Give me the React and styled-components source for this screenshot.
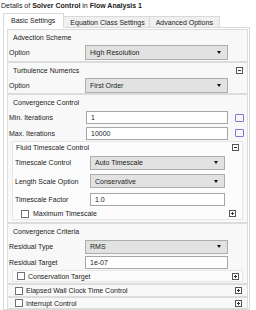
import React from 'react'
import styled, { createGlobalStyle } from 'styled-components'

const Global = createGlobalStyle`
  body {
    margin: 0;
    background: #ffffff;
    font-family: "Liberation Sans", Arial, sans-serif;
    font-size: 7px;
    color: #222222;
  }
`

const Page = styled.div`
  width: 256px;
  height: 310px;
  overflow: hidden;
  display: flex;
  flex-direction: column;
`

const Title = styled.div`
  height: 12px;
  line-height: 12px;
  padding-left: 1px;
  white-space: nowrap;
  flex: none;
  b { font-weight: bold; }
`

const TabStrip = styled.div`
  display: flex;
  align-items: flex-end;
  height: 15px;
  flex: none;
  padding-left: 3px;
`

const Tab = styled.div`
  box-sizing: border-box;
  height: ${p => (p.$active ? 15 : 12)}px;
  line-height: ${p => (p.$active ? 14 : 11)}px;
  padding: ${p => p.$pad};
  background: ${p => (p.$active ? '#ffffff' : '#f0f0f0')};
  border: 1px solid #d9d9d9;
  border-bottom-color: ${p => (p.$active ? '#ffffff' : '#d9d9d9')};
  border-left-width: ${p => (p.$first ? 1 : 0)}px;
  margin-bottom: -1px;
  position: relative;
  z-index: ${p => (p.$active ? 2 : 1)};
  white-space: nowrap;
`

const Panel = styled.div`
  flex: 1;
  margin: 0 6px 0 3px;
  border: 1px solid #d9d9d9;
  background: #ffffff;
  padding: 0 1px 0 3px;
  display: flex;
  flex-direction: column;
  overflow: hidden;
`

const Group = styled.div`
  flex: none;
  border: 1px solid ${p => (p.$inner ? '#e6e6e6' : '#dcdcdc')};
  background: ${p => (p.$inner ? '#fcfcfc' : '#f8f8f8')};
  margin: ${p => p.$margin || '0'};
  padding: ${p => p.$pad || '0'};
  display: flex;
  flex-direction: column;
`

const GroupHead = styled.div`
  display: flex;
  align-items: center;
  justify-content: space-between;
  height: ${p => p.$h}px;
  padding-left: ${p => p.$indent}px;
  padding-right: ${p => p.$right || 0}px;
  white-space: nowrap;
`

const Row = styled.div`
  display: flex;
  align-items: center;
  height: ${p => p.$h}px;
  padding-left: ${p => p.$indent || 1}px;
`

const Label = styled.div`
  width: ${p => p.$w || 76}px;
  flex: none;
  white-space: nowrap;
`

const Select = styled.div`
  flex: none;
  box-sizing: border-box;
  width: ${p => p.$w}px;
  height: ${p => p.$h || 15}px;
  border: 1px solid #adadad;
  background: #e2e2e2;
  padding: 0 6px 0 4px;
  display: flex;
  align-items: center;
  justify-content: space-between;
`

const Arrow = styled.span`
  width: 0;
  height: 0;
  border-left: 2.5px solid transparent;
  border-right: 2.5px solid transparent;
  border-top: 3px solid #111;
`

const Input = styled.div`
  flex: none;
  box-sizing: border-box;
  width: ${p => p.$w}px;
  height: 13px;
  line-height: 11px;
  border: 1px solid #a6a6a6;
  background: #ffffff;
  padding-left: 4px;
`

const Marker = styled.span`
  flex: none;
  box-sizing: border-box;
  width: 9px;
  height: 8px;
  margin-left: 7px;
  border: 1.5px solid #7878d8;
  border-radius: 1px;
`

const Check = styled.span`
  flex: none;
  box-sizing: border-box;
  width: 8px;
  height: 8px;
  border: 1px solid #707070;
  background: #ffffff;
  margin-right: ${p => p.$gap || 4}px;
`

const Toggle = styled.span`
  flex: none;
  position: relative;
  box-sizing: border-box;
  width: 7px;
  height: 7px;
  border: 1px solid #555555;
  background: #ffffff;
  &::before {
    content: '';
    position: absolute;
    left: 1px;
    right: 1px;
    top: 2px;
    height: 1px;
    background: #333333;
  }
  &::after {
    content: '';
    position: absolute;
    top: 1px;
    bottom: 1px;
    left: 2px;
    width: 1px;
    background: ${p => (p.$open ? 'transparent' : '#333333')};
  }
`

const CheckHead = styled.div`
  display: flex;
  align-items: center;
  height: ${p => p.$h}px;
  padding-left: ${p => p.$indent}px;
  padding-right: ${p => p.$right || 0}px;
  white-space: nowrap;
`

const Grow = styled.span`
  flex: 1;
`

function Dropdown({ value, w, h }) {
  return (
    <Select $w={w} $h={h}>
      <span>{value}</span>
      <Arrow />
    </Select>
  )
}

function CheckGroup({ label, indent, right, h, gap }) {
  return (
    <CheckHead $indent={indent} $right={right} $h={h}>
      <Check $gap={gap} />
      <span>{label}</span>
      <Grow />
      <Toggle />
    </CheckHead>
  )
}

export default function App() {
  return (
    <Page>
      <Global />
      <Title>
        Details of <b>Solver Control</b> in <b>Flow Analysis 1</b>
      </Title>
      <TabStrip>
        <Tab $active $first $pad="0 8px 0 7px">Basic Settings</Tab>
        <Tab $pad="0 4px 0 6px">Equation Class Settings</Tab>
        <Tab $pad="0 6px 0 6px">Advanced Options</Tab>
      </TabStrip>
      <Panel>
        <Group $margin="1px 0 0 0">
          <GroupHead $h={14} $indent={5}>Advection Scheme</GroupHead>
          <Row $h={17}>
            <Label>Option</Label>
            <Dropdown value="High Resolution" w={143} />
          </Row>
        </Group>

        <Group>
          <GroupHead $h={14} $indent={5} $right={4}>
            <span>Turbulence Numerics</span>
            <Toggle $open />
          </GroupHead>
          <Row $h={16}>
            <Label>Option</Label>
            <Dropdown value="First Order" w={143} />
          </Row>
        </Group>

        <Group $pad="0 0 2px 0">
          <GroupHead $h={15} $indent={5}>Convergence Control</GroupHead>
          <Row $h={15}>
            <Label $w={77}>Min. Iterations</Label>
            <Input $w={142}>1</Input>
            <Marker />
          </Row>
          <Row $h={16}>
            <Label $w={77}>Max. Iterations</Label>
            <Input $w={142}>10000</Input>
            <Marker />
          </Row>
          <Group $inner $margin="0 4px 0 4px">
            <GroupHead $h={11} $indent={3} $right={3}>
              <span>Fluid Timescale Control</span>
              <Toggle $open />
            </GroupHead>
            <Row $h={19} $indent={2}>
              <Label $w={75}>Timescale Control</Label>
              <Dropdown value="Auto Timescale" w={135} h={14} />
            </Row>
            <Row $h={18} $indent={2}>
              <Label $w={75}>Length Scale Option</Label>
              <Dropdown value="Conservative" w={135} h={14} />
            </Row>
            <Row $h={18} $indent={2}>
              <Label $w={75}>Timescale Factor</Label>
              <Input $w={135}>1.0</Input>
            </Row>
            <CheckGroup label="Maximum Timescale" indent={8} right={6} h={11} />
          </Group>
        </Group>

        <Group $pad="0 0 1px 0">
          <GroupHead $h={15} $indent={5}>Convergence Criteria</GroupHead>
          <Row $h={15}>
            <Label>Residual Type</Label>
            <Dropdown value="RMS" w={143} h={14} />
          </Row>
          <Row $h={16}>
            <Label>Residual Target</Label>
            <Input $w={143}>1e-07</Input>
          </Row>
          <Group $inner $margin="0 4px 0 4px">
            <CheckGroup label="Conservation Target" indent={4} right={3} gap={3} h={10} />
          </Group>
        </Group>

        <Group>
          <CheckGroup label="Elapsed Wall Clock Time Control" indent={7} right={5} gap={3} h={11} />
        </Group>
        <Group>
          <CheckGroup label="Interrupt Control" indent={7} right={5} gap={3} h={10} />
        </Group>
      </Panel>
    </Page>
  )
}
